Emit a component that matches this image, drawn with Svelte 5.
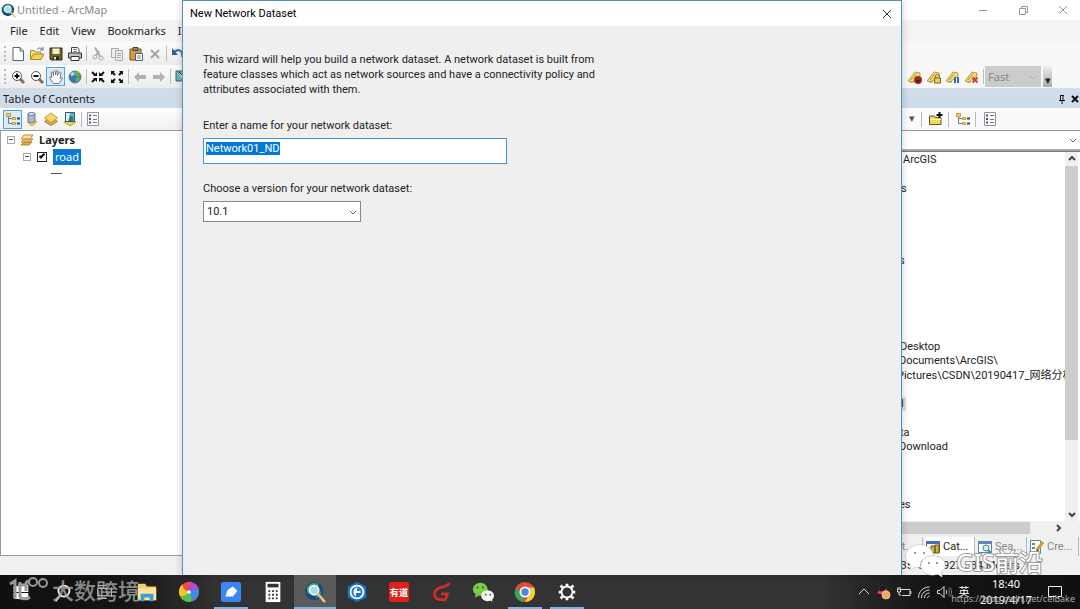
<script lang="ts">
    import { onMount } from 'svelte'

    let name = $state('Network01_ND')
    let version = $state('10.1')
    let roadVisible = $state(true)
    let nameInput: HTMLInputElement

    const menus = ['File', 'Edit', 'View', 'Bookmarks', 'Insert']
    const standardTools = ['new', 'open', 'save', 'print', '|', 'cut', 'copy', 'paste', 'delete', '|', 'undo']
    const navTools = ['zoomin', 'zoomout', 'pan', 'globe', '|', 'shrink', 'expand', '|', 'back', 'forward', '|', 'pointer']
    const labelTools = ['labellock', 'labelpad', 'labelpause', 'labelstop']
    const tocTools = ['tree', 'source', 'layer', 'selection', '|', 'options']
    const catalogTools = ['|', 'connect', '|', 'tree', '|', 'options']

    // one entry per visible line of the catalog tree, the left part lies under the wizard
    const catalogRows = [
        { text: 'ArcGIS', indent: 21 },
        { text: '' },
        { text: 's', indent: 19 },
        { text: '' }, { text: '' }, { text: '' }, { text: '' },
        { text: 's', indent: 17 },
        { text: '' }, { text: '' }, { text: '' }, { text: '' }, { text: '' },
        { text: 'Desktop', indent: 18 },
        { text: 'Documents\\ArcGIS\\', indent: 17 },
        { text: 'Pictures\\CSDN\\20190417_网络分析', indent: 15 },
        { text: '' },
        { text: 'l', indent: 19, picked: true },
        { text: '' },
        { text: 'ta', indent: 18 },
        { text: 'Download', indent: 17 },
        { text: '' }, { text: '' }, { text: '' },
        { text: 'es', indent: 17 }
    ]

    const tabs = [
        { label: 'Cat...', icon: 'catalog', active: true },
        { label: 'Sea...', icon: 'searchtab', active: false },
        { label: 'Cre...', icon: 'create', active: false }
    ]

    const tasks = [
        { id: 'start', title: 'Start' },
        { id: 'search', title: 'Search' },
        { id: 'taskview', title: 'Task View' },
        { id: 'explorer', title: 'File Explorer' },
        { id: 'pinwheel', title: 'Browser' },
        { id: 'note', title: 'Notes', open: true },
        { id: 'calc', title: 'Calculator' },
        { id: 'arcmap', title: 'ArcMap', open: true, current: true },
        { id: 'arcpro', title: 'ArcGIS Pro' },
        { id: 'youdao', title: 'Youdao' },
        { id: 'gbrowser', title: 'Gear' },
        { id: 'wechat', title: 'WeChat' },
        { id: 'chrome', title: 'Chrome', open: true },
        { id: 'settings', title: 'Settings', open: true }
    ]

    const tray = ['up', 'qq', 'battery', 'wifi', 'volume']

    onMount(() => {
        nameInput.focus()
        nameInput.select()
    })
</script>

{#snippet labelTag()}
    <path d="M1 12 8 3l5 1v3l-8 6z" fill="#f3dc6c" stroke="#b39c4c" />
    <path d="M4 11l5-6M3 13h4" stroke="#a8944a" />
{/snippet}

{#snippet icon(id: string)}
    <svg viewBox="0 0 16 16" width="16" height="16" fill="none" aria-hidden="true">
        {#if id === 'new'}
            <path d="M3 1.500h7l3.500 3.500v9.500H3z" fill="#fff" stroke="#56657c" />
            <path d="M10 1.500V5h3.500" stroke="#56657c" />
        {:else if id === 'open'}
            <path d="M1.500 13.500v-9h4l1 1.500h5v2" fill="#f6df84" stroke="#a98a2c" />
            <path d="M1.500 13.500 4.500 8h10.500l-3 5.500z" fill="#f5cf5c" stroke="#a98a2c" />
            <path d="M8 3.500c2-2 4-2 5.500 0M14 1v3h-3" stroke="#3e6fa8" />
        {:else if id === 'save'}
            <path d="M2 2h12v12H3l-1-1z" fill="#6d6421" stroke="#333016" />
            <path d="M4.500 2.500h7V8h-7z" fill="#f2efc8" />
            <path d="M5 10.500h6V14H5z" fill="#252412" />
            <path d="M6 11h2v2.500H6z" fill="#ddd" />
        {:else if id === 'print'}
            <path d="M4.500 7V1.500h6l1.500 2V7" fill="#fff" stroke="#444" />
            <path d="M1.500 7h13v5h-13z" fill="#bfc3c8" stroke="#333" />
            <path d="M4 10.500h8v4H4z" fill="#fff" stroke="#333" />
            <path d="M6 3.500h4M6 5.500h4" stroke="#888" />
            <path d="M12 8.500h1.500" stroke="#d4aa21" />
        {:else if id === 'cut'}
            <path d="M5 1.500l5 9M9 5 6 9" stroke="#aaa" stroke-width="2" />
            <circle cx="5" cy="11" r="2" stroke="#aaa" />
            <circle cx="11" cy="12" r="2" stroke="#aaa" />
        {:else if id === 'copy'}
            <path d="M2.500 2.500h7v9h-7z" fill="#eee" stroke="#aaa" />
            <path d="M6.500 4.500h7v10h-7z" fill="#eee" stroke="#aaa" />
            <path d="M8 7.500h4M8 9.500h4M8 11.500h4" stroke="#aaa" />
        {:else if id === 'paste'}
            <path d="M2 3h11v11H2z" fill="#d79b39" stroke="#7c5517" />
            <path d="M5 1.500h5v3H5z" fill="#8a8a8a" stroke="#444" />
            <path d="M7.500 7.500h7v7h-7z" fill="#fff" stroke="#4d5f86" />
            <path d="M9 10h4M9 12h4" stroke="#6f86b7" />
        {:else if id === 'delete'}
            <path d="M4 4l8 8M12 4l-8 8" stroke="#a5a5a5" stroke-width="2" />
        {:else if id === 'undo'}
            <path d="M4 6c5-4 9-1 8 5" stroke="#3c6fad" stroke-width="2" />
            <path d="M2 2v7h6z" fill="#2d5f9f" />
        {:else if id === 'zoomin' || id === 'zoomout'}
            <path d="M10 10l4 4" stroke="#8d6a4c" stroke-width="3" />
            <circle cx="7" cy="7" r="4.500" fill="#fff" stroke="#555" />
            <path d="M4.500 7h5" stroke="#111" stroke-width="2" />
            {#if id === 'zoomin'}<path d="M7 4.500v5" stroke="#111" stroke-width="2" />{/if}
        {:else if id === 'pan'}
            <path d="M5.500 14.500 2 9.500c-1-2 1-2 2-.5l-1-5c0-1.500 1.500-1.500 2 0l.5 2.500v-4c.5-1.500 2-1 2 0V6l1-4c.5-1 2-.500 1.500 1L9.500 6.500l2-3c1-1 2 0 1.500 1l-1 5 1.500-1c1 0 1 1 0 2.500l-2.500 3.500z" fill="#fff" stroke="#777" />
        {:else if id === 'globe'}
            <circle cx="8" cy="8" r="6" fill="#3f74b4" stroke="#5f7793" />
            <path d="M7 3c3-2 5 0 6 3-1 2-2 2-4 1L7 5zM9 9l4-1c0 3-2 5-4 5z" fill="#61b34c" />
            <path d="M4 6l3-2" stroke="#b9dcf6" stroke-width="3" />
        {:else if id === 'shrink'}
            <path d="M2 3l3 3M14 3l-3 3M2 13l3-3M14 13l-3-3" stroke="#111" stroke-width="2" />
            <path d="M7 3v4H3zM9 3v4h4zM7 13V9H3zM9 13V9h4z" fill="#111" />
        {:else if id === 'expand'}
            <path d="M3 3l3 3M13 3l-3 3M3 13l3-3M13 13l-3-3" stroke="#111" stroke-width="2" />
            <path d="M2 2h4L2 6zM14 2h-4l4 4zM2 14h4l-4-4zM14 14h-4l4-4z" fill="#111" />
        {:else if id === 'back'}
            <path d="M2 8l5-5v3h7v4H7v3z" fill="#b3b3b3" />
        {:else if id === 'forward'}
            <path d="M14 8 9 3v3H2v4h7v3z" fill="#b3b3b3" />
        {:else if id === 'pointer'}
            <path d="M2 2h7v10H2z" fill="#72b7bb" stroke="#3e5d6c" />
            <path d="M5 3l7 7H8l2 4" fill="#fff" stroke="#222" />
        {:else if id === 'labellock'}
            {@render labelTag()}
            <circle cx="11" cy="11" r="4" fill="#9d2926" />
            <path d="M9.500 11h3v2.500h-3z" fill="#4c1412" />
        {:else if id === 'labelpad'}
            {@render labelTag()}
            <path d="M9.500 9V7c0-2 4-2 4 0v2" stroke="#8c742b" />
            <path d="M8.500 9h6v5h-6z" fill="#f2cf56" stroke="#7a6524" />
        {:else if id === 'labelpause'}
            {@render labelTag()}
            <path d="M10 8v6M13 8v6" stroke="#2f6fb5" stroke-width="2" />
        {:else if id === 'labelstop'}
            {@render labelTag()}
            <path d="M8.500 8.500l5 5M13.500 8.500l-5 5" stroke="#cf3a32" stroke-width="2" />
        {:else if id === 'tree'}
            <path d="M3.500 4v8.500H8M4 7.500h4" stroke="#777" />
            <path d="M1.500 2.500h4v3h-4zM7.500 6.500h3v2h-3zM7.500 11.500h3v2h-3z" fill="#f3d26c" stroke="#c09a3c" />
            <path d="M12 7.500h3M12 12.500h3" stroke="#444" stroke-width="2" />
        {:else if id === 'source'}
            <path d="M3 11l5-2 5 2-5 4z" fill="#f1cb51" stroke="#d0aa40" />
            <path d="M4 3v7c0 2 7 2 7 0V3z" fill="#a9b7d1" stroke="#66758f" />
            <ellipse cx="7.500" cy="3" rx="3.500" ry="1.500" fill="#dce4f2" stroke="#66758f" />
        {:else if id === 'layer'}
            <path d="M1.500 10.500 8 6l6.500 4.500L8 14.500z" fill="#dca840" stroke="#ae8330" />
            <path d="M1.500 7 8 2l6.500 5L8 11.500z" fill="#f7d774" stroke="#c29a3b" />
        {:else if id === 'selection'}
            <path d="M2 11l6-3 6 3-6 4z" fill="#f0cb54" stroke="#c79e3a" />
            <path d="M3.500 1.500h9v9h-9z" fill="#52b7be" stroke="#36556a" />
            <path d="M4 2h4l-2 8H4z" fill="#e2f1f5" />
            <path d="M8 5l3 1v4H7z" fill="#187e8c" />
        {:else if id === 'options'}
            <path d="M2.500 1.500h11v13h-11z" fill="#fff" stroke="#8a96aa" />
            <path d="M4 4.500h2M4 8h2M4 11.500h2" stroke="#555" stroke-width="2" />
            <path d="M8 4.500h4M8 8.500h4M8 11.500h4" stroke="#777" />
        {:else if id === 'connect'}
            <path d="M1.500 13.500V5h5l1 1.500H13v7z" fill="#efd95f" stroke="#5f5818" />
            <path d="M2 8.500h11" stroke="#fff6bd" />
            <path d="M11.500 1v6M8.500 4h6" stroke="#111" stroke-width="2" />
        {:else if id === 'catalog'}
            <path d="M1.500 2.500h13v11h-13z" fill="#f6f7fb" stroke="#3f5f94" />
            <path d="M1 2h14v3H1z" fill="#3f6fb5" />
            <path d="M6 7h4v7H6zM10 6h4v8h-4z" fill="#d5b72f" stroke="#665718" />
        {:else if id === 'searchtab'}
            <path d="M1.500 2.500h13v11h-13z" fill="#f6f7fb" stroke="#6a82a8" />
            <path d="M1 2h14v3H1z" fill="#5d86bd" />
            <circle cx="9" cy="9" r="3" fill="#d2eff1" stroke="#3d8a94" />
            <path d="M11 11l3 3" stroke="#3d8a94" stroke-width="2" />
        {:else if id === 'create'}
            <path d="M1.500 1.500h10v13h-10z" fill="#fff" stroke="#628297" />
            <path d="M3 4h3v2H3zM3 8h3v2H3zM3 12h3v1H3z" fill="#3f9b83" />
            <path d="M8 11l6-8" stroke="#d0a02e" stroke-width="3" />
            <path d="M7 13l1-3 2 2z" fill="#333" />
        {:else if id === 'layers'}
            <path d="M2 13l3-3h8l-3 3z" fill="#e1aa43" stroke="#b98a3c" />
            <path d="M2 10l3-3h9l-3 3z" fill="#efc367" stroke="#b98a3c" />
            <path d="M2 7l3-4h9l-3 4z" fill="#fbe2a0" stroke="#b98a3c" />
        {/if}
    </svg>
{/snippet}

{#snippet tools(list: string[], active = '')}
    {#each list as id}
        {#if id === '|'}
            <span class="sep"></span>
        {:else}
            <button class="tool" class:active={id === active} aria-label={id}>{@render icon(id)}</button>
        {/if}
    {/each}
{/snippet}

{#snippet arcLogo()}
    <circle cx="11" cy="11" r="10" fill="#174f78" />
    <path d="M3 8c2-5 8-7 12-5 2 2 0 4-2 5l-4 5-5 1z" fill="#3fa56e" />
    <path d="M13 14l6-3c0 4-3 7-6 8z" fill="#2f8f86" />
    <circle cx="11" cy="10" r="5" fill="#a9dbea" stroke="#e9f6fa" stroke-width="2" />
    <path d="M15 14l7 8" stroke="#d9c48a" stroke-width="3" stroke-linecap="round" />
{/snippet}

{#snippet taskIcon(id: string)}
    <svg viewBox="0 0 24 24" width="22" height="22" fill="none" aria-hidden="true">
        {#if id === 'start'}
            <path d="M4 6l7-1v7H4zM12 5l8-1v8h-8zM4 13h7v7l-7-1zM12 13h8v8l-8-1z" fill="#fff" />
        {:else if id === 'search'}
            <circle cx="13" cy="11" r="6" stroke="#eee" stroke-width="2" />
            <path d="M9 16l-5 6" stroke="#eee" stroke-width="2" />
        {:else if id === 'taskview'}
            <path d="M4 8h10v8H4zM19 7v10M4 5h10M4 19h10" stroke="#ddd" />
        {:else if id === 'explorer'}
            <path d="M2 3h8l2 3h10v15H2z" fill="#f3cf70" />
            <path d="M2 8h20v13H2z" fill="#fbe3a0" />
            <path d="M5 14h14v8h-4v-4H9v4H5z" fill="#36a2d8" />
        {:else if id === 'pinwheel'}
            <circle cx="12" cy="12" r="11" fill="#eb4b3d" />
            <path d="M12 12C9 6 11 2 14 1c5 1 8 4 9 9-4 3-8 3-11 2z" fill="#a84de0" />
            <path d="M12 12c6-3 9-3 11-1 0 5-3 9-7 11-4-2-5-6-4-10z" fill="#3c8ee8" />
            <path d="M12 12c3 5 3 8 2 11-4 0-8-1-11-5 1-4 4-6 9-6z" fill="#4fc54b" />
            <path d="M12 12c-4 4-7 5-10 4-2-4-1-8 2-12 4 0 7 3 8 8z" fill="#f7c52c" />
            <path d="M12 12C7 10 5 7 5 4c2-2 6-4 10-3-3 4-3 7-3 11z" fill="#ee4b49" />
            <circle cx="12" cy="12" r="2" fill="#fff" />
        {:else if id === 'note'}
            <rect x="1" y="1" width="22" height="22" rx="3" fill="#3b86f2" />
            <path d="M6 17l2-7 6-4 5 5-5 6z" fill="#fff" />
        {:else if id === 'calc'}
            <path d="M4 1h16v22H4z" fill="#fff" />
            <path d="M6 3h12v4H6z" fill="#333" />
            <path d="M7 11h10M7 15h10M7 19h10" stroke="#333" stroke-width="2" stroke-dasharray="2 2" />
        {:else if id === 'arcmap'}
            {@render arcLogo()}
        {:else if id === 'arcpro'}
            <path d="M12 1l10 5v12l-10 5-10-5V6z" fill="#1872cf" />
            <circle cx="12" cy="12" r="7" fill="#1872cf" stroke="#fff" stroke-width="2" />
            <path d="M12 7c-5 1-5 8-1 10v-4h5c0-3-1-5-4-6z" fill="#fff" />
            <path d="M12 8h3v3h-3z" fill="#1872cf" />
        {:else if id === 'youdao'}
            <rect x="1" y="1" width="22" height="22" rx="3" fill="#e0211b" />
            <text x="12" y="16" text-anchor="middle" font-size="10" font-weight="700" fill="#fff">有道</text>
        {:else if id === 'gbrowser'}
            <path d="M21 2c-2 4-5 4-9 5-5 1-8 5-7 9s6 5 12 4l2-6h-7" stroke="#d42b2b" stroke-width="3" />
        {:else if id === 'wechat'}
            <ellipse cx="9" cy="9" rx="8" ry="7" fill="#7acb4b" />
            <path d="M4 14l-1 4 5-2z" fill="#7acb4b" />
            <ellipse cx="17" cy="16" rx="7" ry="6" fill="#f4f4f4" />
            <path d="M19 20l3 3v-5z" fill="#f4f4f4" />
            <circle cx="6" cy="7" r="1" fill="#265515" /><circle cx="12" cy="7" r="1" fill="#265515" />
            <circle cx="15" cy="15" r="1" fill="#555" /><circle cx="20" cy="15" r="1" fill="#555" />
        {:else if id === 'chrome'}
            <circle cx="12" cy="12" r="11" fill="#e24a3b" />
            <path d="M2 7l6 7 4 9C2 23-1 14 2 7z" fill="#3aa657" />
            <path d="M12 7h10c3 8-2 16-10 16l5-9z" fill="#f8cd3c" />
            <circle cx="12" cy="12" r="5" fill="#4a86e8" stroke="#f5f5f5" stroke-width="2" />
        {:else if id === 'settings'}
            <circle cx="12" cy="12" r="6" stroke="#fff" stroke-width="2" />
            <g stroke="#fff" stroke-width="3">
                <path d="M12 3v3M12 18v3M3 12h3M18 12h3M5 5l3 3M16 16l3 3M19 5l-3 3M8 16l-3 3" />
            </g>
        {/if}
    </svg>
{/snippet}

{#snippet trayIcon(id: string)}
    <svg viewBox="0 0 16 16" width="16" height="16" fill="none" stroke="#ddd" aria-hidden="true">
        {#if id === 'up'}
            <path d="M3 10l5-5 5 5" />
        {:else if id === 'qq'}
            <ellipse cx="7" cy="6" rx="4" ry="5" fill="#1b1b1b" stroke="#333" />
            <path d="M2 8c2 1 6 1 9-2" stroke="#f0417e" stroke-width="3" />
            <circle cx="10" cy="11" r="4" fill="#f0a675" stroke="#f5c56b" />
        {:else if id === 'battery'}
            <path d="M5 5.500h9v6H6M14 7.500h1v2h-1M2 3v2M4 3v2M1.500 5h3v3h-3zM3 8v3h2" />
        {:else if id === 'wifi'}
            <path d="M2.500 14c0-7 5-11 11-11M5.500 14c0-5 4-8 8-8M8.500 14c0-3 2-5 5-5M11.500 14c0-1 1-2 2-2" />
        {:else if id === 'volume'}
            <path d="M1.500 6.500H4l4-4v11l-4-4H1.500z" />
            <path d="M10 6c1 1 1 3 0 4" /><path d="M12 4c2 2 2 6 0 8M14 3c2 3 2 7 0 10" stroke="#777" />
        {/if}
    </svg>
{/snippet}

{#snippet chevron(dir: string)}
    <svg class="chevron {dir}" viewBox="0 0 10 10" width="10" height="10" fill="none" aria-hidden="true">
        <path d="M2 4l3 3 3-3" stroke="currentColor" />
    </svg>
{/snippet}

<div class="desktop">
    <main class="arcmap">
        <header class="titlebar">
            <svg viewBox="0 0 24 24" width="15" height="15" fill="none" aria-hidden="true">{@render arcLogo()}</svg>
            <span class="caption">Untitled - ArcMap</span>
            <div class="window-buttons">
                <button aria-label="Minimize"><svg viewBox="0 0 12 12" width="12" height="12"><path d="M2 6.500h8" /></svg></button>
                <button aria-label="Restore"><svg viewBox="0 0 12 12" width="12" height="12"><path d="M2.500 4.500h6v6h-6zM4.500 4V2.500h6v6H9" /></svg></button>
                <button aria-label="Close"><svg viewBox="0 0 12 12" width="12" height="12"><path d="M2 2l8 8M10 2l-8 8" /></svg></button>
            </div>
        </header>

        <nav class="menubar">
            {#each menus as menu}
                <button>{menu}</button>
            {/each}
        </nav>

        <div class="toolrow">
            <div class="toolbar">{@render tools(standardTools)}</div>
        </div>
        <div class="toolrow">
            <div class="toolbar">{@render tools(navTools, 'pan')}</div>
            <div class="labeling">
                {@render tools(labelTools)}
                <span class="sep"></span>
                <div class="select-wrap speed">
                    <select aria-label="Labeling engine" disabled><option>Fast</option></select>
                    {@render chevron('down')}
                </div>
                <button class="overflow" aria-label="Toolbar options">▾</button>
            </div>
        </div>

        <div class="panels">
            <section class="toc">
                <h2>Table Of Contents</h2>
                <div class="paneltools">{@render tools(tocTools, 'tree')}</div>
                <div class="layers">
                    <div class="node"><button class="fold" aria-label="Collapse Layers"></button>{@render icon('layers')}<b>Layers</b></div>
                    <div class="node child">
                        <button class="fold" aria-label="Collapse road"></button>
                        <input id="road" type="checkbox" bind:checked={roadVisible} />
                        <label for="road">road</label>
                    </div>
                    <span class="symbol"></span>
                </div>
            </section>

            <div class="map"></div>

            <section class="catalog">
                <h2>
                    <button aria-label="Pin"><svg viewBox="0 0 10 10" width="10" height="10"><path d="M3.500 1v5M6 1v5M3 1.500h4M2 6.500h6M5 7v3" fill="none" stroke="#111" /></svg></button>
                    <button aria-label="Close panel"><svg viewBox="0 0 10 10" width="10" height="10"><path d="M2 2l6 6M8 2l-6 6" stroke="#111" stroke-width="2" /></svg></button>
                </h2>
                <div class="paneltools">
                    <button class="drop" aria-label="Recent">▾</button>
                    {@render tools(catalogTools)}
                </div>
                <div class="location">{@render chevron('down')}</div>
                <div class="browser">
                    <ul>
                        {#each catalogRows as row}
                            <li style:padding-left="{row.indent ?? 0}px"><span class:picked={row.picked}>{row.text}</span></li>
                        {/each}
                    </ul>
                    <div class="vscroll">
                        {@render chevron('up')}
                        <span class="thumb"></span>
                        {@render chevron('down')}
                    </div>
                </div>
                <div class="hscroll"><span class="thumb"></span>{@render chevron('right')}</div>
                <div class="tabs">
                    <button class="first">t...</button>
                    {#each tabs as tab}
                        <button class:active={tab.active}>{@render icon(tab.icon)}{tab.label}</button>
                    {/each}
                </div>
            </section>
        </div>

        <footer class="status">35&nbsp; 3584927.534 Meters</footer>

        <div class="wizard" role="dialog" aria-labelledby="wizard-title">
            <header>
                <h1 id="wizard-title">New Network Dataset</h1>
                <button aria-label="Close wizard"><svg viewBox="0 0 12 12" width="12" height="12"><path d="M2 2l8 8M10 2l-8 8" /></svg></button>
            </header>
            <form>
                <p>
                    This wizard will help you build a network dataset. A network dataset is built from
                    feature classes which act as network sources and have a connectivity policy and
                    attributes associated with them.
                </p>
                <label for="nd-name">Enter a name for your network dataset:</label>
                <input id="nd-name" type="text" spellcheck="false" bind:this={nameInput} bind:value={name} />
                <label for="nd-version">Choose a version for your network dataset:</label>
                <div class="select-wrap version">
                    <select id="nd-version" bind:value={version}>
                        <option>10.1</option>
                    </select>
                    {@render chevron('down')}
                </div>
            </form>
        </div>
    </main>

    <footer class="taskbar">
        {#each tasks as task}
            <button class="task" class:open={task.open} class:current={task.current} aria-label={task.title}>
                {@render taskIcon(task.id)}
            </button>
        {/each}
        <div class="tray">
            {#each tray as id}
                <button aria-label={id}>{@render trayIcon(id)}</button>
            {/each}
            <button class="ime">英</button>
            <div class="clock"><span>18:40</span><span>2019/4/17</span></div>
            <button class="notify" aria-label="Notifications">
                <svg viewBox="0 0 16 16" width="16" height="16" fill="none"><path d="M1.500 2.500h13v10H11v2l-2-2H1.500z" stroke="#eee" /></svg>
            </button>
        </div>
    </footer>

    <div class="mark brand">
        <svg viewBox="0 0 40 28" width="40" height="28" fill="none" stroke="#999" stroke-width="3" aria-hidden="true">
            <path d="M1 8l5-3v17M11 6v14c0 3 6 4 10 1M9 9h8M17 15V8c0-3 2-3 4-3" />
            <circle cx="24" cy="6" r="4" stroke-width="2" /><circle cx="34" cy="7" r="4" stroke-width="2" />
        </svg>
        <span>大数跨境</span>
    </div>
    <div class="mark account">
        <svg viewBox="0 0 42 36" width="42" height="36" aria-hidden="true">
            <path d="M15 1C7 1 1 6 1 12c0 4 2 7 5 9l-1 5 5-3h5c-1-7 5-11 13-11C28 5 22 1 15 1z" fill="#fff" stroke="#bbb" />
            <path d="M28 12c-7 0-12 4-12 10s6 9 12 9l5-1 4 3-1-5c3-2 4-4 4-7 0-5-5-9-12-9z" fill="#fff" stroke="#aaa" />
            <circle cx="10" cy="9" r="1" fill="#777" /><circle cx="19" cy="9" r="1" fill="#777" />
            <circle cx="24" cy="19" r="1" fill="#777" /><circle cx="32" cy="19" r="1" fill="#777" />
        </svg>
        <span>GIS前沿</span>
    </div>
    <div class="mark source">https://blog.csdn.net/ceibake</div>
</div>

<style>
    :global(body) {
        margin: 0;
    }

    .desktop {
        position: relative;
        display: flex;
        flex-direction: column;
        min-height: 100vh;
        overflow: hidden;
        font-family: "Noto Sans", "Noto Sans CJK SC", sans-serif;
        font-size: 11px;
        line-height: 14px;
        color: #222;
        background: #f0f0f0;
    }

    .wizard,
    .catalog {
        font-family: Roboto, "Noto Sans CJK SC", sans-serif;
    }

    button,
    input,
    select {
        font: inherit;
        color: inherit;
        margin: 0;
        padding: 0;
        border: 0;
        border-radius: 0;
        background: none;
        box-sizing: border-box;
    }

    button {
        display: flex;
        align-items: center;
        justify-content: center;
    }

    h1,
    h2,
    p,
    ul {
        margin: 0;
        padding: 0;
        font-size: inherit;
        font-weight: 400;
    }

    svg {
        flex: none;
    }

    .arcmap {
        position: relative;
        flex: 1;
        display: flex;
        flex-direction: column;
    }

    .titlebar {
        display: flex;
        align-items: center;
        height: 20px;
        padding: 0 11px 0 1px;
        gap: 1px;
        background: #fff;
    }

    .caption {
        color: #888;
    }

    .window-buttons {
        display: flex;
        gap: 28px;
        margin-left: auto;
    }

    .window-buttons path {
        fill: none;
        stroke: #999;
    }

    .menubar {
        display: flex;
        align-items: center;
        gap: 12px;
        height: 22px;
        padding-left: 10px;
        background: #f4f4f4;
    }

    .toolrow {
        display: flex;
        height: 23px;
        background: #f8f8f8;
    }

    .toolbar,
    .labeling {
        display: flex;
        align-items: center;
    }

    .toolbar {
        padding: 0 8px 0 4px;
        background: linear-gradient(#fcfcfc, #ececec);
    }

    .toolbar::before {
        content: '';
        width: 4px;
        height: 15px;
        border-left: 2px dotted #bbb;
        box-sizing: border-box;
    }

    .labeling {
        margin-left: auto;
        padding-right: 28px;
    }

    .tool {
        width: 19px;
        height: 19px;
        border: 1px solid transparent;
        flex: none;
    }

    .tool.active {
        border-color: #4fa3e3;
        background: #d8ebfa;
    }

    .sep {
        width: 1px;
        height: 15px;
        margin: 0 1px 0 2px;
        background: #bbb;
        flex: none;
    }

    .select-wrap {
        position: relative;
        display: flex;
        align-items: center;
    }

    .select-wrap select {
        appearance: none;
        width: 100%;
        height: 21px;
        padding: 0 3px;
    }

    .select-wrap .chevron {
        position: absolute;
        right: 3px;
        pointer-events: none;
    }

    .chevron {
        color: #666;
    }

    .chevron.up {
        transform: rotate(180deg);
    }

    .chevron.right {
        transform: rotate(-90deg);
    }

    .speed {
        width: 56px;
        background: #ccc;
    }

    .speed select {
        opacity: 1;
        color: #888;
    }

    .speed .chevron {
        color: #aaa;
    }

    .overflow {
        width: 9px;
        height: 21px;
        margin-left: 2px;
        align-items: flex-end;
        color: #222;
        background: linear-gradient(#eee, #aaa);
    }

    .panels {
        flex: 1;
        display: flex;
        border-top: 1px solid #ddd;
    }

    .toc {
        display: flex;
        flex-direction: column;
        flex: 0 0 190px;
    }

    .map {
        flex: 1;
        background: #fff;
    }

    .catalog {
        display: flex;
        flex-direction: column;
        flex: 0 0 198px;
        min-width: 0;
    }

    h2 {
        display: flex;
        align-items: center;
        height: 19px;
        padding-left: 3px;
        background: #cfddea;
    }

    .catalog h2 {
        justify-content: flex-end;
        gap: 3px;
    }

    .paneltools {
        display: flex;
        align-items: center;
        height: 22px;
        padding-left: 3px;
        background: linear-gradient(#fff, #f0f0f0);
    }

    .catalog .paneltools {
        padding-left: 24px;
        background: #fafafa;
    }

    .catalog .paneltools .sep {
        margin: 0 4px 0 3px;
    }

    .drop {
        width: 12px;
        color: #555;
    }

    .layers {
        flex: 1;
        background: #fff;
        border: 1px solid #999;
    }

    .node {
        display: flex;
        align-items: center;
        gap: 4px;
        height: 17px;
        padding-left: 6px;
    }

    .child {
        gap: 6px;
        padding-left: 22px;
    }

    .fold {
        width: 8px;
        height: 8px;
        border: 1px solid #aaa;
    }

    .fold::before {
        content: '';
        width: 4px;
        height: 1px;
        background: #555;
    }

    .child input {
        appearance: none;
        display: grid;
        place-items: center;
        width: 10px;
        height: 10px;
        border: 1px solid #222;
    }

    .child input:checked::before {
        content: '';
        width: 6px;
        height: 3px;
        margin-bottom: 2px;
        border: solid #111;
        border-width: 0 0 2px 2px;
        box-sizing: border-box;
        transform: rotate(-45deg);
    }

    .child label {
        padding: 1px 2px;
        color: #fff;
        background: #0a78d6;
    }

    .symbol {
        display: block;
        width: 11px;
        height: 1px;
        margin: 8px 0 0 50px;
        background: #556;
    }

    .location {
        display: flex;
        align-items: center;
        justify-content: flex-end;
        height: 18px;
        padding-right: 2px;
        background: #fff;
        border-top: 1px solid #999;
        border-bottom: 2px solid #aaa;
    }

    .browser {
        flex: 1;
        display: flex;
        background: #fff;
        border-top: 1px solid #777;
    }

    ul {
        flex: 1;
        min-width: 0;
        display: flex;
        flex-direction: column;
        padding: 1px 0 9px;
        overflow: hidden;
        list-style: none;
    }

    li {
        flex: 1;
        display: flex;
        align-items: center;
        white-space: nowrap;
        height: 14px;
    }

    .picked {
        padding-right: 2px;
        background: #ddd;
    }

    .vscroll {
        display: flex;
        flex-direction: column;
        align-items: center;
        width: 13px;
        margin-right: 2px;
        padding: 2px 0;
        gap: 2px;
        background: #f0f0f0;
    }

    .vscroll .chevron,
    .hscroll .chevron {
        color: #444;
    }

    .vscroll .chevron path,
    .hscroll .chevron path {
        stroke-width: 2;
    }

    .vscroll .thumb {
        width: 100%;
        height: 75%;
        margin-bottom: auto;
        background: #cdcdcd;
    }

    .hscroll {
        display: flex;
        align-items: center;
        height: 14px;
        padding-right: 17px;
        background: #f0f0f0;
    }

    .hscroll .thumb {
        width: 148px;
        height: 12px;
        margin-right: auto;
        background: #cdcdcd;
    }

    .tabs {
        display: flex;
        height: 19px;
        margin-top: 2px;
        gap: 2px;
        background: #f0f0f0;
    }

    .tabs button {
        width: 50px;
        flex: none;
        justify-content: flex-start;
        gap: 2px;
        color: #888;
        border-right: 1px solid #bbb;
    }

    .tabs .first {
        width: 41px;
        justify-content: flex-end;
        padding-right: 8px;
    }

    .tabs .active {
        color: #222;
        background: #fff;
    }

    .status {
        display: flex;
        align-items: center;
        justify-content: flex-end;
        height: 19px;
        padding-right: 60px;
        font-family: Roboto, sans-serif;
        background: #f0f0f0;
    }

    .wizard {
        position: absolute;
        top: 0;
        bottom: 0;
        left: 182px;
        right: 178px;
        border: 1px solid #4f93bd;
        border-bottom: 0;
        box-sizing: border-box;
        background: #efefef;
        box-shadow: 0 0 8px #0003;
    }

    .wizard header {
        display: flex;
        align-items: center;
        justify-content: space-between;
        height: 25px;
        padding: 0 8px 0 7px;
        color: #000;
        background: #fff;
    }

    .wizard header path {
        stroke: #333;
    }

    form {
        display: flex;
        flex-direction: column;
        align-items: flex-start;
        padding: 26px 20px;
    }

    p {
        max-width: 404px;
        margin-bottom: 22px;
        line-height: 15px;
    }

    form label {
        margin-bottom: 5px;
    }

    #nd-name {
        width: 304px;
        max-width: 100%;
        height: 26px;
        margin-bottom: 18px;
        padding: 0 2px 6px;
        border: 1px solid #3f95dc;
        outline: 0;
        background: #fff;
    }

    #nd-name::selection {
        color: #fff;
        background: #0078d7;
    }

    .version {
        width: 158px;
    }

    .version select {
        border: 1px solid #888;
        background: #fff;
    }

    .taskbar {
        display: flex;
        height: 34px;
        background: linear-gradient(90deg, #101010, #141414 120px, #333 220px, #333 76%, #141414 86%, #101010);
        color: #fff;
    }

    .task {
        position: relative;
        width: 42px;
        flex: none;
    }

    .task.current {
        background: #5a5a5a;
    }

    .task.open::after {
        content: '';
        position: absolute;
        left: 4px;
        right: 4px;
        bottom: 0;
        height: 2px;
        background: #78b4e8;
    }

    .task.current::after {
        left: 0;
        right: 0;
    }

    .tray {
        display: flex;
        align-items: center;
        margin-left: auto;
        padding-right: 8px;
    }

    .tray button {
        width: 20px;
    }

    .clock {
        display: flex;
        flex-direction: column;
        align-items: center;
        width: 64px;
        line-height: 16px;
    }

    .tray .notify {
        width: 34px;
    }

    .mark {
        position: absolute;
        display: flex;
        align-items: center;
        pointer-events: none;
        white-space: nowrap;
    }

    .brand {
        left: 9px;
        bottom: 5px;
        gap: 3px;
        font-size: 22px;
        font-weight: 500;
        line-height: 28px;
        color: #aaac;
    }

    .account {
        right: 37px;
        bottom: 29px;
        gap: 9px;
        font-size: 24px;
        line-height: 36px;
        color: #fff;
        -webkit-text-stroke: 2px #999;
        paint-order: stroke fill;
    }

    .source {
        right: 5px;
        bottom: 4px;
        font-size: 9px;
        line-height: 12px;
        color: #aaa;
    }
</style>
